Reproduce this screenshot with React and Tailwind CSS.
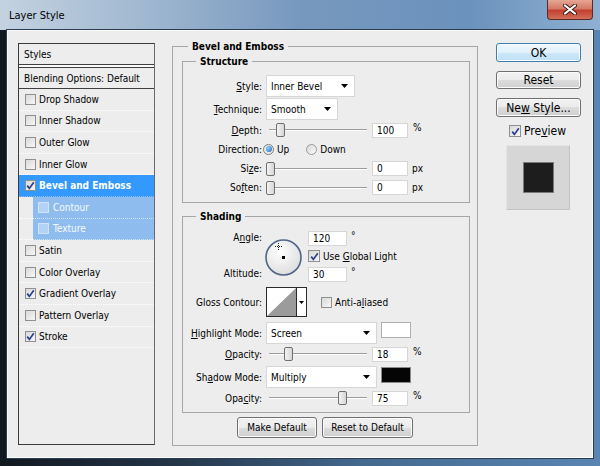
import clsx from "clsx";

const effects = [
  { name: "Drop Shadow" },
  { name: "Inner Shadow" },
  { name: "Outer Glow" },
  { name: "Inner Glow" },
  { name: "Bevel and Emboss", checked: true, active: true },
  { name: "Contour", sub: true },
  { name: "Texture", sub: true },
  { name: "Satin" },
  { name: "Color Overlay" },
  { name: "Gradient Overlay", checked: true },
  { name: "Pattern Overlay" },
  { name: "Stroke", checked: true },
];

// underlined accelerator letter
const U = ({ children }) => <span className="underline underline-offset-[1px]">{children}</span>;

const Check = ({ checked, light, size = "h-[11px] w-[11px]" }) => (
  <span
    className={clsx(
      "flex shrink-0 items-center justify-center border",
      size,
      light
        ? "border-[#d2e3f7] bg-[#b4d2f5]"
        : "border-[#8e8f8f] bg-[linear-gradient(135deg,#d9d9d9,#f7f7f7)]"
    )}
  >
    {checked && (
      <svg width="9" height="9" viewBox="0 0 9 9">
        <path d="M1.2 4.6 L3.4 7.4 L7.8 1.2" fill="none" stroke="#28418f" strokeWidth="1.7" />
      </svg>
    )}
  </span>
);

const Arrow = () => (
  <svg width="7" height="4" viewBox="0 0 7 4">
    <path d="M0 0 H7 L3.5 4 Z" fill="#000" />
  </svg>
);

const Drop = ({ w, text }) => (
  <div className={clsx("ml-[4px] flex h-[22px] items-center justify-between border border-[#d6d6d6] bg-white pl-[4px] pr-[6px]", w)}>
    <span>{text}</span>
    <Arrow />
  </div>
);

const Num = ({ value, w = "w-[36px]" }) => (
  <div className={clsx("flex h-[15px] items-center border border-[#d6d6d6] bg-white pl-[4px]", w)}>{value}</div>
);

const Slider = ({ pos }) => (
  <div className="relative ml-[4px] flex h-full w-[106px] items-center pl-[3px] pr-[5px]">
    <div className="h-[2px] w-full border-t border-[#9c9c9c] border-b border-b-white" />
    <div
      className="absolute top-1/2 h-[14px] w-[9px] -translate-y-1/2 rounded-[2px] border border-[#6f6f6f] bg-[linear-gradient(90deg,#f3f3f3,#d6d6d6)]"
      style={{ left: 3 + pos - 4 }}
    />
  </div>
);

const Label = ({ children }) => <div className="w-[79px] shrink-0 text-right">{children}</div>;

const Btn = ({ children, className, primary }) => (
  <button
    type="button"
    className={clsx(
      "flex items-center justify-center rounded-[3px] border shadow-[inset_0_0_0_1px_#fbfbfb]",
      primary
        ? "border-[#3c7fb1] bg-[linear-gradient(#eef7fd,#e1f1fb_50%,#cde8f8_50%,#bfe0f5)]"
        : "border-[#707070] bg-[linear-gradient(#f2f2f2,#ebebeb_50%,#dddddd_50%,#cfcfcf)]",
      className
    )}
  >
    <span>{children}</span>
  </button>
);

export default function App() {
  return (
    <div className="flex h-[466px] w-[600px] flex-col overflow-hidden bg-[linear-gradient(90deg,#111820_0%,#24364a_30%,#44698f_60%,#5a85b3_100%)] font-['DejaVu_Sans_Condensed','DejaVu_Sans',sans-serif] text-[10px] leading-[13px] text-black">
      {/* title bar */}
      <div className="flex h-[30px] shrink-0 items-start bg-[linear-gradient(90deg,#c4d2e0_0%,#a3bad2_22%,#7798be_50%,#6b92bd_78%,#8fb0d2_100%)]">
        <div className="pl-[9px] pt-[9px] text-[11px]">Layer Style</div>
        <div className="ml-auto mr-[7px] flex h-[20px] w-[46px] items-center justify-center rounded-b-[4px] border border-t-0 border-[#5b2a26] bg-[linear-gradient(#e7a696,#d47a66_45%,#c2402e_55%,#d2705a)]">
          <svg width="14" height="11" viewBox="0 0 14 11">
            <path d="M2 1.5 L12 9.5 M12 1.5 L2 9.5" stroke="#3b1a17" strokeWidth="4" strokeLinecap="round" />
            <path d="M2 1.5 L12 9.5 M12 1.5 L2 9.5" stroke="#fff" strokeWidth="2.2" strokeLinecap="round" />
          </svg>
        </div>
      </div>

      {/* dialog body */}
      <div className="mx-[7px] flex h-[428px] w-[586px] items-start border border-[#fafafa] bg-[#ededed] pl-[10px] pt-[9px] shadow-[0_0_0_1px_#2b3d50]">
        {/* styles list */}
        <div className="mt-[3px] flex h-[402px] w-[137px] shrink-0 flex-col border border-[#3a3a3a] border-r-[#6a6a6a]">
          <div className="flex h-[20px] items-center pl-[5px]">Styles</div>
          <div className="h-[1px] bg-[#3f3f3f]" />
          <div className="h-[2px] bg-[#fafafa]" />
          <div className="h-[1px] bg-[#3f3f3f]" />
          <div className="flex h-[21px] items-center border-b border-[#3f3f3f] pl-[5px]">Blending Options: Default</div>
          {effects.map((e) =>
            e.sub ? (
              <div key={e.name} className="flex h-[21.6px] shrink-0">
                <div className="w-[14px] border-b border-dotted border-white" />
                <div className="flex flex-1 items-center gap-[4px] border-b border-dotted border-[#cfe3fa] bg-[#8ebcee] pl-[5px] text-[#f7faff]">
                  <Check light />
                  {e.name}
                </div>
              </div>
            ) : (
              <div
                key={e.name}
                className={clsx(
                  "flex h-[21.6px] shrink-0 items-center gap-[3px] border-b border-dotted pl-[6px]",
                  e.active ? "border-[#8ebcee] bg-[#3399ff] font-bold text-white" : "border-white"
                )}
              >
                <Check checked={e.checked} />
                {e.name}
              </div>
            )
          )}
        </div>

        {/* Bevel and Emboss group */}
        <fieldset className="ml-[17px] w-[306px] shrink-0 border border-[#a6a6a6] pb-[7px]">
          <legend className="ml-[15px] px-[4px] font-bold leading-[13px]">Bevel and Emboss</legend>

          <fieldset className="ml-[9px] mt-[2px] w-[288px] border border-[#a6a6a6] pb-[5px]">
            <legend className="ml-[13px] px-[4px] font-bold leading-[13px]">Structure</legend>
            <div className="mt-[7px] flex h-[22px] items-center">
              <Label><U>S</U>tyle:</Label>
              <Drop w="w-[89px]" text="Inner Bevel" />
            </div>
            <div className="mt-[1px] flex h-[22px] items-center">
              <Label><U>T</U>echnique:</Label>
              <Drop w="w-[72px]" text="Smooth" />
            </div>
            <div className="mt-[1px] flex h-[18px] items-center">
              <Label><U>D</U>epth:</Label>
              <Slider pos={11} />
              <Num value="100" />
              <span className="ml-[5px] self-start">%</span>
            </div>
            <div className="flex h-[20px] items-center">
              <Label>Direction:</Label>
              <span className="ml-[1px] flex h-[11px] w-[11px] items-center justify-center rounded-full border border-[#7b7b7b] bg-[#e9e9e9]">
                <span className="h-[6px] w-[6px] rounded-full bg-[radial-gradient(circle_at_35%_35%,#8fd0ff,#1a64b5)]" />
              </span>
              <span className="ml-[3px]">Up</span>
              <span className="ml-[17px] h-[11px] w-[11px] rounded-full border border-[#9a9a9a] bg-[linear-gradient(135deg,#d8d8d8,#fafafa)]" />
              <span className="ml-[3px]">Down</span>
            </div>
            <div className="flex h-[19px] items-center">
              <Label>Si<U>z</U>e:</Label>
              <Slider pos={1} />
              <Num value="0" />
              <span className="ml-[4px]">px</span>
            </div>
            <div className="flex h-[19px] items-center">
              <Label>So<U>f</U>ten:</Label>
              <Slider pos={1} />
              <Num value="0" />
              <span className="ml-[4px]">px</span>
            </div>
          </fieldset>

          <fieldset className="ml-[9px] mt-[7px] w-[288px] border border-[#a6a6a6] pb-[5px]">
            <legend className="ml-[13px] px-[4px] font-bold leading-[13px]">Shading</legend>
            <div className="mt-[8px] flex h-[52px]">
              <div className="flex w-[79px] shrink-0 flex-col items-end justify-between pb-[3px]">
                <span>A<U>n</U>gle:</span>
                <span>Altitude:</span>
              </div>
              <svg className="ml-[3px] mt-[8px] shrink-0" width="38" height="38" viewBox="0 0 38 38">
                <defs>
                  <radialGradient id="dial" cx="40%" cy="35%" r="70%">
                    <stop offset="0" stopColor="#ffffff" />
                    <stop offset="1" stopColor="#dcdcdc" />
                  </radialGradient>
                </defs>
                <circle cx="18.5" cy="18.5" r="17.5" fill="url(#dial)" stroke="#4f6586" strokeWidth="1.6" />
                <rect x="17" y="17" width="3" height="3" fill="#000" />
                <path d="M13.5 4 V11 M10 7.5 H17" stroke="#222" strokeWidth="1" strokeDasharray="1 1" />
              </svg>
              <div className="ml-[5px] flex flex-col">
                <div className="flex">
                  <Num value="120" w="w-[39px]" />
                  <span className="ml-[4px] leading-[10px]">°</span>
                </div>
                <div className="mt-[4px] flex h-[12px] items-center">
                  <Check checked size="h-[12px] w-[12px]" />
                  <span className="ml-[3px]">Use <U>G</U>lobal Light</span>
                </div>
                <div className="mt-[5px] flex">
                  <Num value="30" w="w-[39px]" />
                  <span className="ml-[4px] leading-[10px]">°</span>
                </div>
              </div>
            </div>
            <div className="mt-[4px] flex h-[30px] items-center">
              <Label>Gloss Contour:</Label>
              <div className="ml-[4px] flex h-[30px] w-[41px] border border-[#2a2a2a] bg-white">
                <svg width="29" height="28" viewBox="0 0 29 28">
                  <path d="M0 28 L29 0 V28 Z" fill="#9b9b9b" />
                </svg>
                <div className="flex flex-1 items-center justify-center border-l border-[#2a2a2a]">
                  <svg width="5" height="3" viewBox="0 0 5 3">
                    <path d="M0 0 H5 L2.5 3 Z" fill="#000" />
                  </svg>
                </div>
              </div>
              <span className="ml-[14px]">
                <Check />
              </span>
              <span className="ml-[3px]">Anti-a<U>l</U>iased</span>
            </div>
            <div className="mt-[5px] flex h-[22px] items-center">
              <Label><U>H</U>ighlight Mode:</Label>
              <Drop w="w-[111px]" text="Screen" />
              <div className="ml-[4px] h-[16px] w-[30px] self-start border border-[#aeaeae] bg-white" />
            </div>
            <div className="mt-[1px] flex h-[18px] items-center">
              <Label><U>O</U>pacity:</Label>
              <Slider pos={19} />
              <Num value="18" />
              <span className="ml-[5px] self-start">%</span>
            </div>
            <div className="mt-[3px] flex h-[22px] items-center">
              <Label>Sh<U>a</U>dow Mode:</Label>
              <Drop w="w-[111px]" text="Multiply" />
              <div className="ml-[4px] mt-[1px] h-[16px] w-[30px] self-start border border-[#8a8a8a] bg-[#050505]" />
            </div>
            <div className="mt-[1px] flex h-[18px] items-center">
              <Label>Opa<U>c</U>ity:</Label>
              <Slider pos={73} />
              <Num value="75" />
              <span className="ml-[5px] self-start">%</span>
            </div>
          </fieldset>

          <div className="mt-[4px] flex justify-center gap-[5px]">
            <Btn className="h-[21px] w-[80px]">Make Default</Btn>
            <Btn className="h-[21px] w-[91px]">Reset to Default</Btn>
          </div>
        </fieldset>

        {/* right column */}
        <div className="ml-[18px] mt-[3px] flex w-[85px] shrink-0 flex-col text-[12px] leading-[14px]">
          <Btn primary className="h-[19px] w-full">OK</Btn>
          <Btn className="mt-[9px] h-[18px] w-full">Reset</Btn>
          <Btn className="mt-[9px] h-[19px] w-full">
            Ne<U>w</U> Style...
          </Btn>
          <div className="ml-[13px] mt-[7px] flex h-[14px] items-center">
            <Check checked size="h-[12px] w-[12px]" />
            <span className="ml-[3px]">Pre<U>v</U>iew</span>
          </div>
          <div className="ml-[10px] mt-[7px] flex h-[65px] w-[64px] items-center justify-center border border-[#e6e6e6] border-r-[#c4c4c4] border-b-[#c4c4c4] bg-[#d6d6d6]">
            <div className="h-[31px] w-[31px] border border-[#7a7a7a] bg-[#1d1d1d]" />
          </div>
        </div>
      </div>
    </div>
  );
}
